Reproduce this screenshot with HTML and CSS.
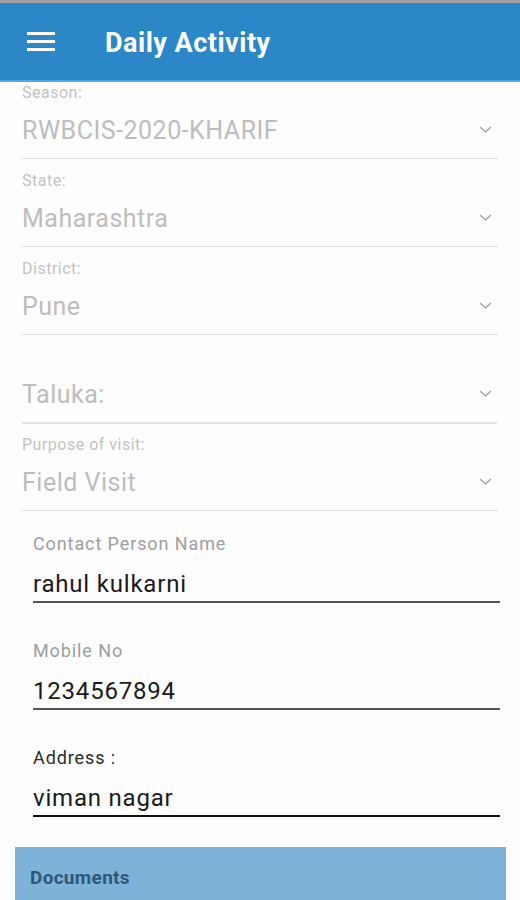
FILE: index.html
```html
<html>
	<head>
		<meta charset="UTF-8" />
		<title>Daily Activity</title>
		<link rel="stylesheet" href="styles.css">
	</head>
	<body>
		<div class="statusbar"></div>
		<div class="appbar">
			<svg class="menu" width="28" height="22" viewBox="0 0 28 22">
				<rect x="0" y="2" width="28" height="3" fill="#fff"/>
				<rect x="0" y="10" width="28" height="3" fill="#fff"/>
				<rect x="0" y="18" width="28" height="3" fill="#fff"/>
			</svg>
			<span class="title">Daily Activity</span>
		</div>
		<div class="selects">
			<div class="pick">
				<div class="pick-label">Season:</div>
				<div class="pick-row"><span>RWBCIS-2020-KHARIF</span><svg class="chev" width="13" height="8" viewBox="0 0 13 8"><polyline points="1,1 6.5,6 12,1" fill="none" stroke="#a8a8a8" stroke-width="1.6"/></svg></div>
			</div>
			<div class="pick">
				<div class="pick-label">State:</div>
				<div class="pick-row"><span>Maharashtra</span><svg class="chev" width="13" height="8" viewBox="0 0 13 8"><polyline points="1,1 6.5,6 12,1" fill="none" stroke="#a8a8a8" stroke-width="1.6"/></svg></div>
			</div>
			<div class="pick">
				<div class="pick-label">District:</div>
				<div class="pick-row"><span>Pune</span><svg class="chev" width="13" height="8" viewBox="0 0 13 8"><polyline points="1,1 6.5,6 12,1" fill="none" stroke="#a8a8a8" stroke-width="1.6"/></svg></div>
			</div>
			<div class="pick solid">
				<div class="pick-label"></div>
				<div class="pick-row"><span>Taluka:</span><svg class="chev" width="13" height="8" viewBox="0 0 13 8"><polyline points="1,1 6.5,6 12,1" fill="none" stroke="#a8a8a8" stroke-width="1.6"/></svg></div>
			</div>
			<div class="pick">
				<div class="pick-label">Purpose of visit:</div>
				<div class="pick-row"><span>Field Visit</span><svg class="chev" width="13" height="8" viewBox="0 0 13 8"><polyline points="1,1 6.5,6 12,1" fill="none" stroke="#a8a8a8" stroke-width="1.6"/></svg></div>
			</div>
		</div>
		<div class="inputs">
			<div class="field">
				<div class="field-label">Contact Person Name</div>
				<div class="field-value">rahul kulkarni</div>
			</div>
			<div class="field">
				<div class="field-label">Mobile No</div>
				<div class="field-value">1234567894</div>
			</div>
			<div class="field focus">
				<div class="field-label">Address :</div>
				<div class="field-value">viman nagar</div>
			</div>
		</div>
		<div class="section">Documents</div>
	</body>
</html>
```

FILE: styles.css
```css
body { margin: 0; background: #fdfdfd; font-family: Roboto, "Noto Sans", sans-serif; overflow: hidden; }

.statusbar { height: 3px; background: #a3a3a3; }
.appbar { height: 77px; background: #2b87c8; border-bottom: 2px solid #55a9e0;
	display: flex; align-items: center; color: #fff; }
.menu { margin-left: 27px; margin-top: -2px; }
.title { margin-left: 50px; font-size: 27px; font-weight: 700; margin-top: 2px; letter-spacing: 0.5px; }

.selects { padding: 2px 23px 0 22px; }
.pick { border-bottom: 1px dotted #c8c8c8; margin-bottom: 13px; }
.pick.solid { border-bottom: 2px solid #e2e2e2; margin-bottom: 12px; }
.pick-label { height: 18px; line-height: 18px; font-size: 16px; color: #c2c2c2; letter-spacing: 0.5px; }
.pick-row { height: 56px; display: flex; align-items: center; justify-content: space-between;
	font-size: 25px; color: #bdbdbd; padding-right: 5px; letter-spacing: 0.5px; }

.inputs { padding: 10px 20px 0 33px; }
.field { margin-bottom: 38px; }
.field-label { line-height: 20px; font-size: 18px; color: #9e9e9e; letter-spacing: 0.9px; }
.field-value { line-height: 30px; margin-top: 15px; font-size: 24px; color: #1a1a1a; padding-bottom: 2px;
	border-bottom: 2px solid #555; letter-spacing: 0.8px; }
.field.focus { margin-bottom: 30px; }
.field.focus .field-label { color: #2a2a2a; }
.field.focus .field-value { border-bottom-color: #111; }

.section { margin: 0 14px 0 15px; height: 60px; background: #7eb2d8; color: #2e5778;
	font-size: 19px; font-weight: 700; padding: 19px 0 0 15px; box-sizing: border-box; letter-spacing: 0.3px; }
```
